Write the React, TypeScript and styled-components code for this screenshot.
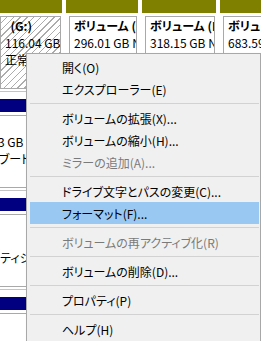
import React from 'react';
import styled, { createGlobalStyle } from 'styled-components';

const Global = createGlobalStyle`
  html, body { margin: 0; padding: 0; background: #ffffff; overflow: hidden; }
  #root { width: 261px; height: 341px; }
`;

const Page = styled.div`
  position: relative;
  width: 261px;
  height: 341px;
  overflow: hidden;
  background: #ffffff;
  font-family: "Noto Sans CJK JP", "Noto Sans", sans-serif;
  font-size: 12px;
  color: #000;
  font-feature-settings: "palt";
`;

const DiskRow = styled.div<{ $offset: number }>`
  display: flex;
  flex-direction: column;
  height: 99px;
  margin-left: ${(p) => p.$offset}px;
`;

const Cells = styled.div`
  display: flex;
  gap: 4px;
  height: 89px;
`;

const RowDivider = styled.div`
  margin-top: 2px;
  height: 1px;
  background: #c4c4c4;
`;

const Column = styled.div<{ $width: number }>`
  display: flex;
  flex-direction: column;
  flex: 0 0 ${(p) => p.$width}px;
  width: ${(p) => p.$width}px;
`;

const Header = styled.div<{ $color: string }>`
  height: 13px;
  background: ${(p) => p.$color};
`;

const Body = styled.div`
  display: flex;
  flex: 1;
  padding: 3px 1px 0 3px;
`;

const Box = styled.div<{ $hatched?: boolean }>`
  flex: 1;
  min-width: 0;
  border: 1px solid #a9a9a9;
  padding: 0 4px;
  overflow: hidden;
  background: ${(p) =>
    p.$hatched
      ? 'repeating-linear-gradient(135deg, #ffffff 0px, #ffffff 3.8px, #acacac 3.8px, #acacac 4.8px)'
      : '#ffffff'};
`;

const Line = styled.div<{ $bold?: boolean }>`
  height: 17px;
  line-height: 17px;
  white-space: pre;
  font-weight: ${(p) => (p.$bold ? 700 : 400)};
`;

const Menu = styled.div`
  position: absolute;
  left: 26px;
  top: 53px;
  width: 229px;
  padding: 2px 1px 4px 3px;
  background: #f0f0f0;
  border: 1px solid #a8a8a8;
  box-shadow: 2px 2px 3px rgba(0, 0, 0, 0.18);
`;

const Item = styled.div<{ $disabled?: boolean; $active?: boolean }>`
  display: flex;
  align-items: center;
  height: 22px;
  padding-left: 32px;
  white-space: nowrap;
  color: ${(p) => (p.$disabled ? '#7a7a7a' : '#000000')};
  background: ${(p) => (p.$active ? '#99c9f3' : 'transparent')};
`;

const Separator = styled.div`
  margin: 3px 0;
  height: 1px;
  background: #d2d2d2;
`;

type CellData = {
  width: number;
  color: string;
  hatched?: boolean;
  lines: { text: string; bold?: boolean }[];
};

type RowData = { offset: number; cells: CellData[] };

const OLIVE = '#808000';
const NAVY = '#000080';

const rows: RowData[] = [
  {
    offset: -3,
    cells: [
      {
        width: 65,
        color: OLIVE,
        hatched: true,
        lines: [
          { text: '  (G:)', bold: true },
          { text: '116.04 GB' },
          { text: '正常 (論理ドライブ)' },
        ],
      },
      {
        width: 72,
        color: OLIVE,
        lines: [
          { text: 'ボリューム (H:)', bold: true },
          { text: '296.01 GB NTFS' },
          { text: '正常 (論理ドライブ)' },
        ],
      },
      {
        width: 74,
        color: OLIVE,
        lines: [
          { text: 'ボリューム (I:)', bold: true },
          { text: '318.15 GB NTFS' },
          { text: '正常 (論理ドライブ)' },
        ],
      },
      {
        width: 90,
        color: OLIVE,
        lines: [
          { text: 'ボリューム (J:)', bold: true },
          { text: '683.59 GB NTFS' },
          { text: '正常 (論理ドライブ)' },
        ],
      },
    ],
  },
  {
    offset: -40,
    cells: [
      {
        width: 420,
        color: NAVY,
        lines: [
          { text: ' (C:)', bold: true },
          { text: '465.63 GB NTFS' },
          { text: '正常 (ブート、ページ ファイル、クラッシュ ダンプ、プライマリ パーティション)' },
        ],
      },
    ],
  },
  {
    offset: -117,
    cells: [
      {
        width: 420,
        color: NAVY,
        lines: [
          { text: '', bold: true },
          { text: '450 MB' },
          { text: '正常 (プライマリ パーティション)' },
        ],
      },
    ],
  },
  {
    offset: -200,
    cells: [
      {
        width: 480,
        color: NAVY,
        lines: [
          { text: ' (D:)', bold: true },
          { text: '931.51 GB' },
          { text: '正常 (プライマリ パーティション)' },
        ],
      },
    ],
  },
];

type MenuEntry =
  | { kind: 'item'; label: string; disabled?: boolean; active?: boolean }
  | { kind: 'sep' };

const menu: MenuEntry[] = [
  { kind: 'item', label: '開く(O)' },
  { kind: 'item', label: 'エクスプローラー(E)' },
  { kind: 'sep' },
  { kind: 'item', label: 'ボリュームの拡張(X)...' },
  { kind: 'item', label: 'ボリュームの縮小(H)...' },
  { kind: 'item', label: 'ミラーの追加(A)...', disabled: true },
  { kind: 'sep' },
  { kind: 'item', label: 'ドライブ文字とパスの変更(C)...' },
  { kind: 'item', label: 'フォーマット(F)...', active: true },
  { kind: 'sep' },
  { kind: 'item', label: 'ボリュームの再アクティブ化(R)', disabled: true },
  { kind: 'sep' },
  { kind: 'item', label: 'ボリュームの削除(D)...' },
  { kind: 'sep' },
  { kind: 'item', label: 'プロパティ(P)' },
  { kind: 'sep' },
  { kind: 'item', label: 'ヘルプ(H)' },
];

export default function App() {
  return (
    <Page>
      <Global />
      {rows.map((row, ri) => (
        <DiskRow key={ri} $offset={row.offset}>
          <Cells>
            {row.cells.map((cell, ci) => (
              <Column key={ci} $width={cell.width}>
                <Header $color={cell.color} />
                <Body>
                  <Box $hatched={cell.hatched}>
                    {cell.lines.map((l, li) => (
                      <Line key={li} $bold={l.bold}>
                        {l.text}
                      </Line>
                    ))}
                  </Box>
                </Body>
              </Column>
            ))}
          </Cells>
          <RowDivider />
        </DiskRow>
      ))}
      <Menu>
        {menu.map((m, i) =>
          m.kind === 'sep' ? (
            <Separator key={i} />
          ) : (
            <Item key={i} $disabled={m.disabled} $active={m.active}>
              {m.label}
            </Item>
          ),
        )}
      </Menu>
    </Page>
  );
}
